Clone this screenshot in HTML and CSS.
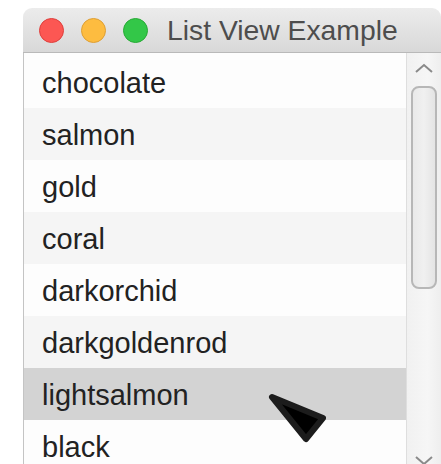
FILE: index.html
```html
<!DOCTYPE html>
<html>
<head>
<meta charset="utf-8">
<link rel="stylesheet" href="styles.css">
</head>
<body>
<div class="window">
  <div class="titlebar">
    <span class="light red"></span>
    <span class="light yellow"></span>
    <span class="light green"></span>
    <span class="title">List View Example</span>
  </div>
  <div class="content">
    <ul class="list">
      <li class="row">chocolate</li>
      <li class="row alt">salmon</li>
      <li class="row">gold</li>
      <li class="row alt">coral</li>
      <li class="row">darkorchid</li>
      <li class="row alt">darkgoldenrod</li>
      <li class="row selected">lightsalmon</li>
      <li class="row">black</li>
    </ul>
    <div class="scrollbar">
      <svg class="arrow" width="20" height="12" viewBox="0 0 20 12"><path d="M2 10 L10 3 L18 10" fill="none" stroke="#8a8a8a" stroke-width="2"/></svg>
      <div class="thumb"></div>
      <div class="track-rest"></div>
      <svg class="arrow" width="20" height="12" viewBox="0 0 20 12"><path d="M2 2 L10 9 L18 2" fill="none" stroke="#8a8a8a" stroke-width="2"/></svg>
    </div>
  </div>
</div>
<svg class="cursor" width="64" height="56" viewBox="0 0 64 56">
  <path d="M4 4 L55 25 L38 46 Z" fill="#000" stroke="#1c1c1c" stroke-width="6" stroke-linejoin="round"/>
</svg>
</body>
</html>
```
FILE: styles.css
```css
html, body {
  margin: 0;
  padding: 0;
  background: #ffffff;
  overflow: hidden;
}

body {
  width: 441px;
  height: 464px;
  position: relative;
  font-family: "Liberation Sans", Arial, sans-serif;
}

.window {
  margin: 8px 0 0 23px;
  width: 418px;
  border-radius: 9px 9px 0 0;
  overflow: hidden;
  background: #fff;
}

.titlebar {
  height: 44px;
  border-bottom: 1px solid #b9b9b9;
  background: linear-gradient(#ececec, #d8d8d8);
  display: flex;
  align-items: center;
  padding-left: 16px;
}

.light {
  width: 25px;
  height: 25px;
  border-radius: 50%;
  margin-right: 17px;
  box-sizing: border-box;
}
.red { background: #fc5753; border: 1px solid #df3f3c; }
.yellow { background: #fdbc40; border: 1px solid #de9f34; }
.green { background: #33c748; border: 1px solid #27aa35; }

.title {
  margin-left: 2px;
  font-size: 28.3px;
  color: #4d4d4d;
}

.content {
  display: flex;
  border-left: 1px solid #c4c4c4;
  height: 420px;
}

.list {
  list-style: none;
  margin: 0;
  padding: 3px 0 0 0;
  flex: 1;
  background: #fdfdfd;
}

.row {
  height: 52px;
  line-height: 54px;
  padding-left: 18px;
  font-size: 29px;
  color: #222;
}

.row.alt { background: #f5f5f5; }
.row.selected { background: #d3d3d3; }

.scrollbar {
  width: 34px;
  flex: none;
  border-left: 1px solid #dedede;
  background: linear-gradient(90deg, #f1f1f1, #f6f6f6 60%, #eeeeee);
  display: flex;
  flex-direction: column;
  align-items: center;
}

.arrow {
  flex: none;
  margin-top: 9px;
}

.thumb {
  margin-top: 12px;
  width: 26px;
  height: 203px;
  box-sizing: border-box;
  border: 2px solid #b7b7b7;
  border-radius: 8px;
  background: linear-gradient(90deg, #e9e9e9, #f0f0f0 50%, #e4e4e4);
}

.track-rest { flex: 1; }

.scrollbar .arrow:last-child {
  margin-top: 0;
  margin-bottom: 6px;
}

.cursor {
  position: absolute;
  left: 268px;
  top: 393px;
}
```
